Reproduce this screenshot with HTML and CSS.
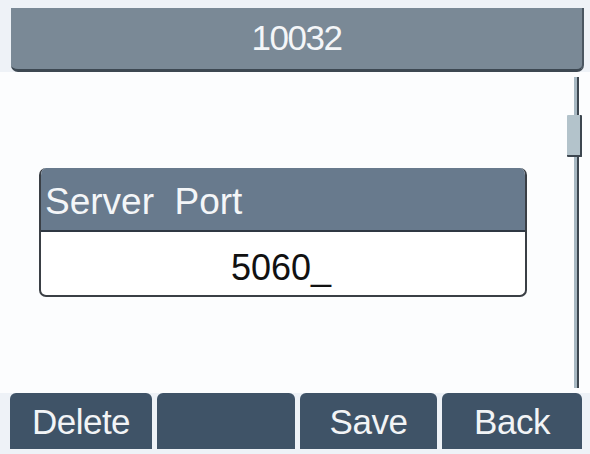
FILE: index.html
```html
<!DOCTYPE html>
<html lang="en">
  <head>
    <meta charset="UTF-8" />
    <meta name="viewport" content="width=device-width, initial-scale=1.0" />
    <title>Server Port</title>
    <link rel="stylesheet" href="styles.css">
  </head>
  <body>
    <div class="screen">
      <div class="title-bar">10032</div>

      <div class="content">
        <div class="page">
          <div class="dialog">
            <div class="dialog-label">Server  Port</div>
            <div class="dialog-value">5060_</div>
          </div>
        </div>
        <div class="scrollbar">
          <div class="scroll-thumb"></div>
        </div>
      </div>

      <div class="softkeys">
        <div class="softkey">Delete</div>
        <div class="softkey"></div>
        <div class="softkey">Save</div>
        <div class="softkey">Back</div>
      </div>
    </div>
  </body>
</html>
```

FILE: styles.css
```css
*,
*::before,
*::after {
  box-sizing: border-box;
  padding: 0;
  margin: 0;
}
body {
  width: 590px;
  height: 454px;
  overflow: hidden;
  background: #eef2f7;
  font-family: "Liberation Sans", Arial, sans-serif;
}
.screen {
  height: 100%;
  display: flex;
  flex-direction: column;
  padding: 8px 6px 5px 10px;
}
.title-bar {
  height: 64px;
  margin-left: 1px;
  display: flex;
  justify-content: center;
  align-items: center;
  padding-bottom: 2px;
  background: #7a8996;
  border-bottom: 3px solid #3d4852;
  border-right: 2px solid #4a5661;
  border-radius: 0 0 7px 7px;
  color: #f4f6f8;
  font-size: 35px;
  letter-spacing: -1.5px;
}
.content {
  flex: 1;
  display: flex;
  background: #fcfdfe;
  margin-right: -6px;
  margin-left: -10px;
  padding-left: 10px;
  padding-right: 6px;
}
.page {
  flex: 1;
  padding: 96px 0 0 29px;
}
.dialog {
  width: 488px;
  border: 2px solid #3a3f45;
  border-top: none;
  border-radius: 7px;
  overflow: hidden;
  background: #fff;
}
.dialog-label {
  height: 64px;
  padding: 15px 0 0 4px;
  background: #687a8d;
  border-bottom: 2px solid #2f3843;
  color: #f4f6f8;
  font-size: 37px;
  white-space: pre;
  line-height: 1;
}
.dialog-value {
  height: 63px;
  padding-top: 18px;
  padding-right: 4px;
  text-align: center;
  color: #111;
  font-size: 36px;
  line-height: 1;
}
/* track line runs down the middle, thumb sits over it */
.scrollbar {
  width: 18px;
  margin: 5px 0;
  background: linear-gradient(
    to right,
    transparent 8px,
    #a7b8c2 8px,
    #a7b8c2 11px,
    #3d4750 11px,
    #3d4750 13px,
    transparent 13px
  );
}
.scroll-thumb {
  width: 15px;
  height: 42px;
  margin: 38px 0 0 1px;
  background: #b3c3cb;
  border-right: 2px solid #3d4750;
  border-bottom: 2px solid #3d4750;
  border-radius: 1px;
}
.softkeys {
  height: 56px;
  display: grid;
  grid-template-columns: 142px 138px 137px 140px;
  column-gap: 5px;
  padding-right: 1px;
}
.softkey {
  display: flex;
  justify-content: center;
  align-items: center;
  background: #3f5367;
  border-radius: 6px 6px 0 0;
  color: #f2f4f6;
  font-size: 35px;
  letter-spacing: -0.5px;
  padding-top: 2px;
}
```
